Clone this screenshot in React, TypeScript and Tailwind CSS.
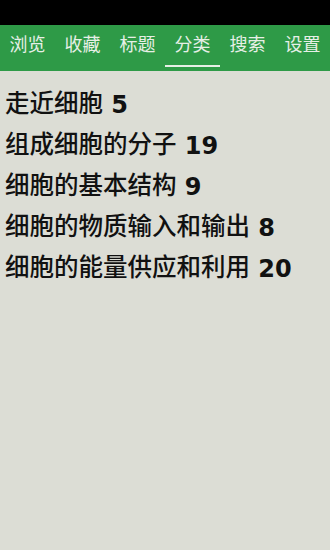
import React from 'react';

const tabs = ['浏览', '收藏', '标题', '分类', '搜索', '设置'];

const items: [string, number][] = [
  ['走近细胞', 5],
  ['组成细胞的分子', 19],
  ['细胞的基本结构', 9],
  ['细胞的物质输入和输出', 8],
  ['细胞的能量供应和利用', 20],
];

export default function App() {
  return (
    <div
      className="w-[330px] h-[550px] flex flex-col bg-[#dcddd5] overflow-hidden"
      style={{ fontFamily: '"Liberation Sans", "Noto Sans CJK SC", sans-serif' }}
    >
      {/* 状态栏 */}
      <div className="h-[25px] bg-black" />
      {/* 顶部标签 */}
      <div className="h-[46px] bg-[#2e9a47] flex">
        {tabs.map((t, i) => (
          <div key={t} className="w-[55px] flex flex-col items-center">
            <div className="flex-1 flex items-center text-[18px] text-[#e6efe6]">{t}</div>
            <div className={i === 3 ? 'h-[2px] w-[55px] bg-[#e6efe6] mb-[4px]' : 'h-[2px] mb-[4px]'} />
          </div>
        ))}
      </div>
      {/* 分类列表 */}
      <div className="flex flex-col pt-[13px] pl-[5px]">
        {items.map(([name, n]) => (
          <div key={name} className="h-[41px] flex items-center text-[24.5px] text-[#111] whitespace-nowrap">
            <span className="font-medium">{name}</span>
            <span className="font-bold font-['DejaVu_Sans',sans-serif] text-[24px]">&nbsp;{n}</span>
          </div>
        ))}
      </div>
    </div>
  );
}
